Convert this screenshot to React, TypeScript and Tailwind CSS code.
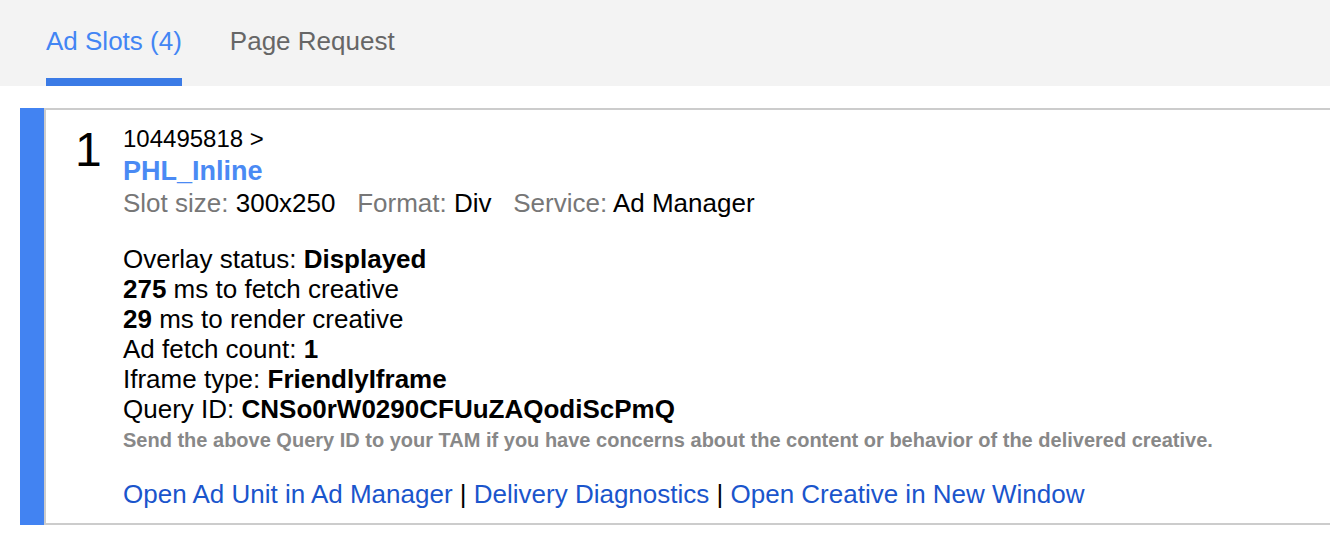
export default function App() {
  return (
    <div className="w-[1330px] h-[542px] bg-white font-['Liberation_Sans',Arial,sans-serif] text-black overflow-hidden">
      {/* tabs */}
      <div className="h-[86px] bg-[#f3f3f3] flex pl-[46px] gap-12">
        <div className="h-full pt-[26px] border-b-8 border-[#3b7be6] text-[26px] leading-[30px] text-[#4285f4]">
          Ad Slots (4)
        </div>
        <div className="h-full pt-[26px] text-[26px] leading-[30px] text-[#666]">Page Request</div>
      </div>

      {/* slot card */}
      <div className="mt-[22px] ml-5 border-l-[24px] border-[#4283f2] h-[417px]">
        <div className="h-full border-2 border-r-0 border-[#cccccc] flex pl-[29px] pt-4">
          <div className="w-12 text-[48px] leading-[48px]">1</div>
          <div className="flex flex-col">
            <div className="text-[24px] leading-[26px]">104495818 &gt;</div>
            <div className="mt-1 text-[27px] leading-[30px] font-bold text-[#4a8af4]">PHL_Inline</div>
            <div className="mt-[2px] text-[26px] leading-[30px] whitespace-pre">
              <span className="text-[#777]">Slot size: </span>300x250
              <span className="text-[#777]">   Format: </span>Div
              <span className="text-[#777]">   Service: </span>Ad Manager
            </div>

            <div className="mt-[26px] text-[26px] leading-[30px]">
              <div>
                Overlay status: <b>Displayed</b>
              </div>
              <div>
                <b>275</b> ms to fetch creative
              </div>
              <div>
                <b>29</b> ms to render creative
              </div>
              <div>
                Ad fetch count: <b>1</b>
              </div>
              <div>
                Iframe type: <b>FriendlyIframe</b>
              </div>
              <div>
                Query ID: <b>CNSo0rW0290CFUuZAQodiScPmQ</b>
              </div>
            </div>
            <div className="mt-1 text-[20px] leading-[24px] font-bold text-[#888]">
              Send the above Query ID to your TAM if you have concerns about the content or behavior of the delivered
              creative.
            </div>

            <div className="mt-[27px] text-[26px] leading-[30px] text-[#1a55cc]">
              <a href="#">Open Ad Unit in Ad Manager</a>
              <span className="text-black"> | </span>
              <a href="#">Delivery Diagnostics</a>
              <span className="text-black"> | </span>
              <a href="#">Open Creative in New Window</a>
            </div>
          </div>
        </div>
      </div>
    </div>
  );
}
